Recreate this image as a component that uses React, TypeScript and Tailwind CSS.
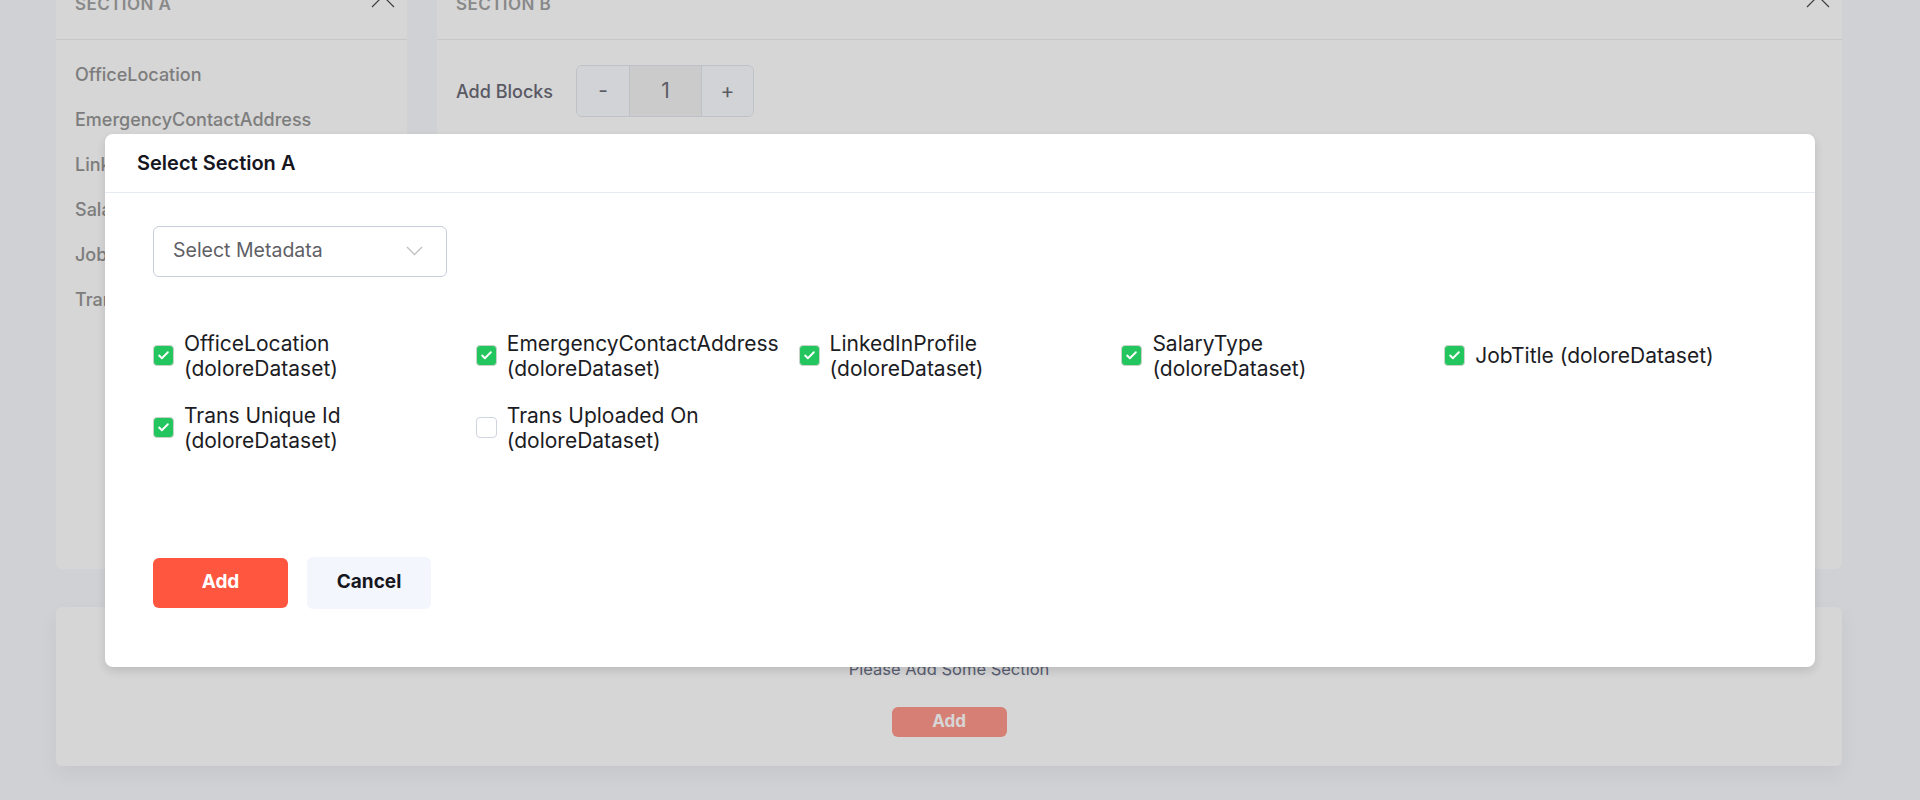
import { Check } from "lucide-react";

const fields = [
    { name: "OfficeLocation", checked: true },
    { name: "EmergencyContactAddress", checked: true },
    { name: "LinkedInProfile", checked: true },
    { name: "SalaryType", checked: true },
    { name: "JobTitle", checked: true },
    { name: "Trans Unique Id", checked: true },
    { name: "Trans Uploaded On", checked: false },
];

const sideItems = [
    "OfficeLocation",
    "EmergencyContactAddress",
    "LinkedInProfile",
    "SalaryType",
    "JobTitle",
    "Trans Unique Id",
];

function CollapseIcon() {
    return (
        <svg width="24" height="13" viewBox="0 0 24 13" className="mt-[-7px]" fill="none">
            <path d="M1 12 L12 1 L23 12" stroke="#4a4a4a" strokeWidth="1.2" />
        </svg>
    );
}

function PanelHeader({ title }: { title: string }) {
    return (
        <div className="flex h-[70px] items-center justify-between border-b border-[#ededed] pr-[12px] pl-[19px]">
            <span className="text-[17px] font-semibold tracking-wide text-[#a4a4a4]">{title}</span>
            <CollapseIcon />
        </div>
    );
}

function CheckItem({ name, checked }: { name: string; checked: boolean }) {
    return (
        <label className="flex items-center gap-[10px]">
            {/* Checkbox */}
            <span
                className={`flex h-[21px] w-[21px] shrink-0 items-center justify-center rounded-[4px] border ${
                    checked ? "border-[#c9d3c9] bg-[#22c55e]" : "border-[#cfd4de] bg-white"
                }`}
            >
                {checked && <Check size={13} strokeWidth={3.5} color="#ffffff" />}
            </span>
            <span className="max-w-[255px] text-[21px] leading-[25px] text-[#1c1c24]">
                {name} (doloreDataset)
            </span>
        </label>
    );
}

export default function App() {
    return (
        <div className="relative h-[800px] overflow-hidden bg-[#f8f9fe] font-['Inter',sans-serif]">
            {/* Page behind the modal */}
            <div className="mt-[-30px] pl-[56px]">
                <div className="flex w-[1786px] gap-[30px]">
                    <div className="h-[599px] w-[351px] rounded-b-[6px] bg-white">
                        <PanelHeader title="SECTION A" />
                        <div className="flex flex-col gap-[23px] pt-[24px] pl-[19px]">
                            {sideItems.map((s) => (
                                <p key={s} className="text-[18px] leading-[22px] font-medium text-[#959595]">
                                    {s}
                                </p>
                            ))}
                        </div>
                    </div>
                    <div className="h-[599px] flex-1 rounded-b-[6px] bg-white">
                        <PanelHeader title="SECTION B" />
                        <div className="flex items-center gap-[23px] pt-[25px] pl-[19px]">
                            <span className="text-[18px] font-medium text-[#6b6b78]">Add Blocks</span>
                            <div className="flex h-[52px] overflow-hidden rounded-[6px] border border-[#e3e6ee] text-[21px] text-[#6e6e78]">
                                <button className="w-[52px] bg-[#fbfcff]">-</button>
                                <div className="flex w-[73px] items-center justify-center border-x border-[#e3e6ee] bg-[#f2f2f4]">
                                    1
                                </div>
                                <button className="w-[51px] bg-[#fbfcff]">+</button>
                            </div>
                        </div>
                    </div>
                </div>

                {/* Empty sections */}
                <div className="mt-[38px] flex h-[159px] w-[1786px] flex-col items-center rounded-[6px] bg-white pt-[52px] shadow-[0_8px_20px_rgba(0,0,0,0.05)]">
                    <p className="text-[16.5px] leading-[20px] text-[#6a7088]">Please Add Some Section</p>
                    <button className="mt-[28px] h-[30px] w-[115px] rounded-[6px] bg-[#ff5640] text-[17px] font-bold text-white opacity-60">
                        Add
                    </button>
                </div>
            </div>

            {/* Overlay */}
            <div className="absolute inset-0 flex items-center justify-center bg-black/[0.16]">
                <div className="w-[1710px] rounded-[8px] bg-white shadow-[0_4px_10px_rgba(0,0,0,0.12)]">
                    <div className="flex h-[59px] items-center border-b border-[#e6eaf3] px-[32px]">
                        <h2 className="text-[20px] font-semibold text-[#16161f]">Select Section A</h2>
                    </div>

                    <div className="px-[48px] pt-[33px] pb-[58px]">
                        {/* Select */}
                        <div className="flex h-[51px] w-[294px] items-center justify-between rounded-[6px] border border-[#c8cedb] pr-[23px] pl-[19px]">
                            <span className="text-[19.5px] text-[#5f5f66]">Select Metadata</span>
                            <svg width="17" height="10" viewBox="0 0 17 10" fill="none">
                                <path d="M1 1 L8.5 8.5 L16 1" stroke="#c2c2c2" strokeWidth="1.4" />
                            </svg>
                        </div>

                        {/* Fields */}
                        <div className="mt-[54px] grid grid-cols-5 gap-y-[22px]">
                            {fields.map((f) => (
                                <CheckItem key={f.name} name={f.name} checked={f.checked} />
                            ))}
                        </div>

                        {/* Actions */}
                        <div className="mt-[104px] flex items-center gap-[19px]">
                            <button className="h-[50px] w-[135px] rounded-[6px] bg-[#ff5640] text-[19px] font-bold text-white">
                                Add
                            </button>
                            <button className="h-[52px] w-[124px] rounded-[6px] bg-[#f3f6fc] text-[19px] font-bold text-[#16161f]">
                                Cancel
                            </button>
                        </div>
                    </div>
                </div>
            </div>
        </div>
    );
}
